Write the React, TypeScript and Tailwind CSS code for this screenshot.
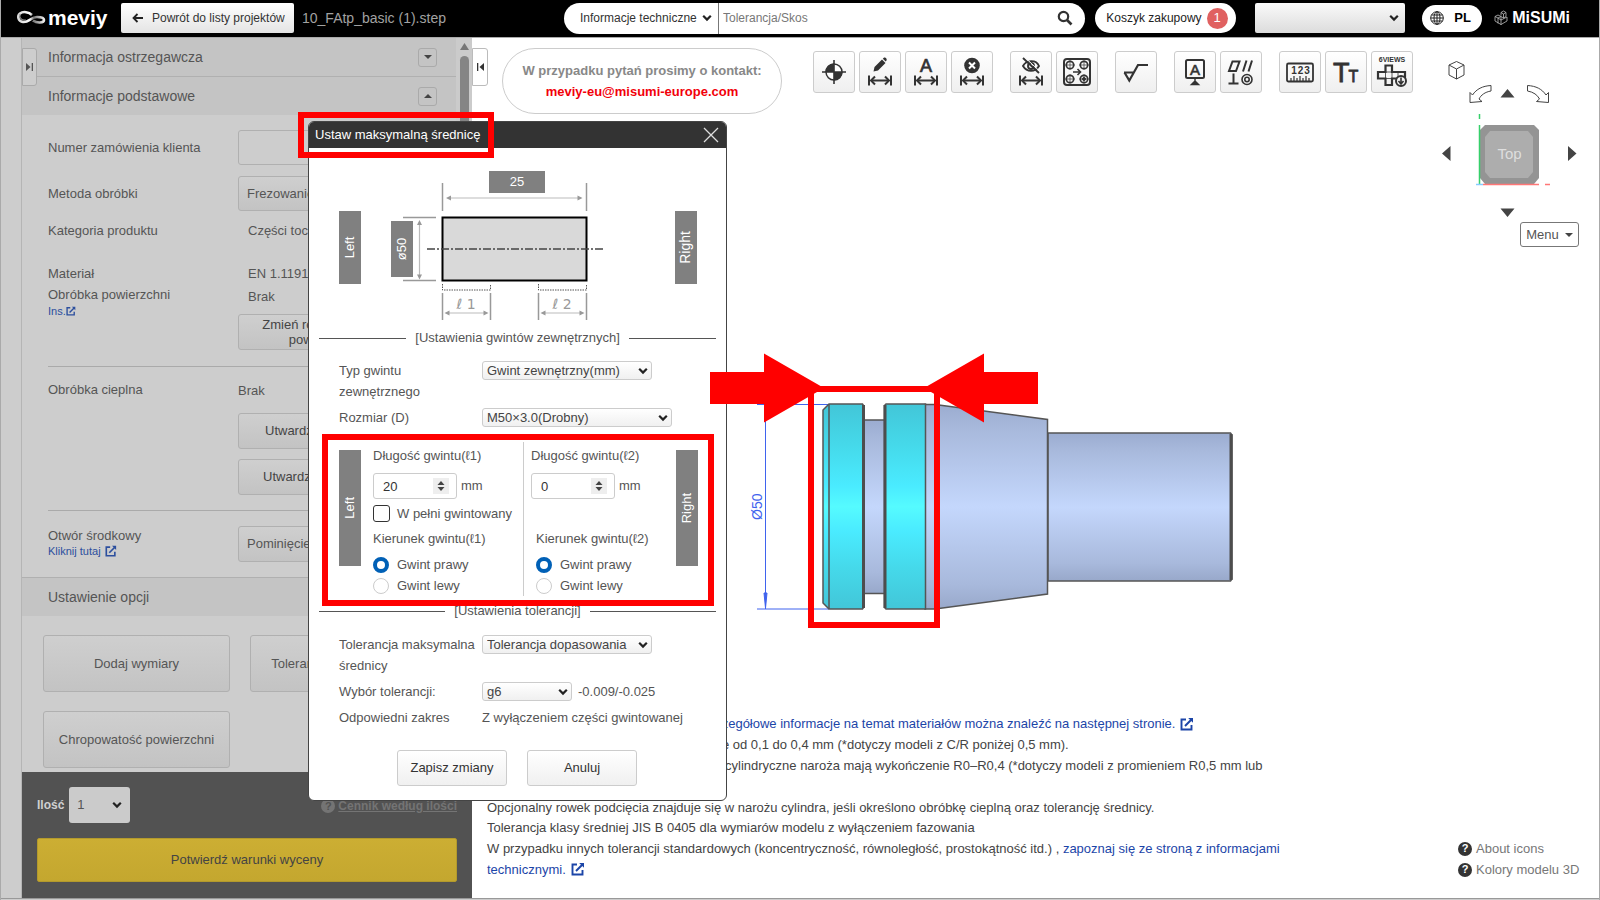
import React from "react";

const FONT = "font-['Liberation_Sans',Arial,sans-serif]";

function Chevron({ className = "" }: { className?: string }) {
  return (
    <svg viewBox="0 0 10 8" className={`pointer-events-none absolute h-2 w-2.5 ${className}`} aria-hidden="true">
      <path d="M1.2 1.8 5 5.6 8.8 1.8" fill="none" stroke="#222" strokeWidth="2.2" />
    </svg>
  );
}

function Select({ label, value, className = "", wrap = "", chevron = "right-2 top-1/2 -mt-1" }: {
  label: string; value: string; className?: string; wrap?: string; chevron?: string;
}) {
  return (
    <div className={`relative ${wrap}`}>
      <select aria-label={label} defaultValue={value} className={`block h-full w-full appearance-none outline-none ${className}`}>
        <option value={value}>{value}</option>
      </select>
      <Chevron className={chevron} />
    </div>
  );
}

function ExternalIcon({ className = "" }: { className?: string }) {
  return (
    <svg viewBox="0 0 14 14" className={`inline-block ${className}`} fill="none" stroke="currentColor" strokeWidth="1.9" aria-hidden="true">
      <path d="M6 2.5H1.5v10h10V8" />
      <path d="M5 9 12 2" />
      <path d="M8.2 1h4.8v4.8z" fill="currentColor" stroke="none" />
    </svg>
  );
}

function HelpDot({ className = "" }: { className?: string }) {
  return (
    <span aria-hidden="true" className={`inline-flex h-3.5 w-3.5 shrink-0 items-center justify-center rounded-full text-[11px] font-bold leading-none ${className}`}>
      ?
    </span>
  );
}

/* ---------- header ---------- */

function Header() {
  return (
    <header className="flex h-[38px] items-center border-b border-[#aaa] bg-black pr-[29px] pb-px pl-[15px]">
      <div className="flex w-[105px] shrink-0 items-center gap-0.5">
        <svg viewBox="0 0 30 18" className="h-[18px] w-[30px]" fill="none" aria-hidden="true">
          <defs>
            <linearGradient id="loop" x1="0" x2="1">
              <stop offset="0" stopColor="#d9d9d9" />
              <stop offset=".45" stopColor="#fff" />
              <stop offset=".6" stopColor="#777" />
              <stop offset="1" stopColor="#eee" />
            </linearGradient>
          </defs>
          <path d="M16 6C13 3 7 2 4 4.500s-2 8 3 8.500c6 .5 8-5 14-5 4 0 7 1 7 3 0 3-7 3.500-11 .5" stroke="url(#loop)" strokeWidth="2.600" />
          <path d="M4 5c-1 4 2 7 6 6" stroke="#8a8a8a" strokeWidth="1.200" />
        </svg>
        <span className="text-[21px] font-bold leading-6 text-white">meviy</span>
      </div>
      <button className="flex h-[30px] w-[173px] shrink-0 items-center gap-[9px] rounded-[2px] bg-linear-to-b from-white to-[#e4e4e4] pl-[11px] text-xs text-[#333]">
        <svg viewBox="0 0 11 10" className="h-2.5 w-[11px]" fill="none" stroke="#222" strokeWidth="1.800" aria-hidden="true">
          <path d="M11 5H1.500M5.500 1 1.500 5l4 4" />
        </svg>
        Powrót do listy projektów
      </button>
      <span className="w-[270px] shrink-0 pl-2 text-sm text-[#a2a2a2]">10_FAtp_basic (1).step</span>
      <div className="flex h-[31px] flex-1 items-stretch overflow-hidden rounded-full bg-white">
        <Select label="Kategoria wyszukiwania" value="Informacje techniczne" wrap="w-[155px] border-r border-[#777]" className="pl-4 text-xs text-[#333]" chevron="right-1.5 top-1/2 -mt-1" />
        <input aria-label="Szukaj" placeholder="Tolerancja/Skos" className="min-w-0 flex-1 pl-1 text-xs outline-none placeholder:text-[#777]" />
        <button aria-label="Szukaj" className="mr-2 w-5">
          <svg viewBox="0 0 16 16" className="h-4 w-4" fill="none" stroke="#333" aria-hidden="true">
            <circle cx="6.500" cy="6.500" r="4.700" strokeWidth="2.200" />
            <path d="m10 10 4.500 4.500" strokeWidth="2.600" />
          </svg>
        </button>
      </div>
      <button className="ml-2.5 flex h-[30px] w-[141px] items-center gap-[5px] rounded-full bg-white pl-[11px] text-xs text-[#222]">
        Koszyk zakupowy
        <span className="flex h-[21px] w-[21px] items-center justify-center rounded-full bg-[#e06161] text-[13px] text-white">1</span>
      </button>
      <Select label="Konto" value=" " wrap="ml-[19px] h-[30px] w-[150px]" className="rounded-[2px] bg-linear-to-b from-[#fafafa] to-[#dcdcdc]" chevron="right-1.5 top-1/2 -mt-1" />
      <button className="ml-[17px] flex h-[27px] w-[60px] items-center gap-2.5 rounded-full bg-white pl-2 text-[13px] font-bold text-black">
        <svg viewBox="0 0 14 14" className="h-3.5 w-3.5" fill="none" stroke="#222" strokeWidth="1" aria-hidden="true">
          <circle cx="7" cy="7" r="6.300" />
          <ellipse cx="7" cy="7" rx="3" ry="6.300" />
          <path d="M7 .7v12.600M.7 7h12.600M1.500 4h11M1.500 10h11" />
        </svg>
        PL
      </button>
      <div className="ml-3 flex items-center gap-1">
        <svg viewBox="0 0 14 16" className="h-4 w-3.5" fill="none" stroke="#bbb" strokeWidth=".8" aria-hidden="true">
          <path d="M1 6.500 4 5l3 1.500v3.500l3-1.500 3-1.500v4l-6 3.500-6-3.500zM1 6.500 4 8v5.500M4 8l3-1.500M7 10v5M7 10l-3-2M7 5.500V2.500L9.500 1 12 2.500v4L9.500 8 7 6.500M7 2.500l2.500 1.500V8M9.500 4 12 2.500" />
        </svg>
        <span className="text-base font-bold leading-5 text-white">MiSUMi</span>
      </div>
    </header>
  );
}

/* ---------- side panel ---------- */

const sideBtn = "rounded-[3px] border border-[#b0b0b0] bg-linear-to-b from-[#cfcfcf] to-[#c3c3c3] text-[13px]";

function Toggle({ up, label }: { up?: boolean; label: string }) {
  return (
    <button aria-label={label} className="flex h-[19px] w-[19px] items-center justify-center rounded-[3px] border border-[#aaa]">
      <svg viewBox="0 0 8 4" className="h-1 w-2" aria-hidden="true">
        <path d={up ? "M0 4 4 0l4 4z" : "M0 0h8L4 4z"} fill="#444" />
      </svg>
    </button>
  );
}

function Sidebar() {
  return (
    <aside className="flex shrink-0 bg-[#cdcdcd] text-[13px] text-[#555]">
      <div className="w-[21px] border-r border-[#b5b5b5]" />
      <div className="relative flex w-[450px] flex-col">
        <button aria-label="Rozwiń panel" className="absolute top-[10px] left-0 flex h-[38px] w-[15px] items-center justify-center rounded-r-[3px] border border-[#aaa] bg-[#cdcdcd]">
          <svg viewBox="0 0 7 8" className="h-2 w-[7px]" fill="#555" aria-hidden="true"><path d="M0 0l4.500 4L0 8zM5.700 0H7v8H5.700z" /></svg>
        </button>
        <div className="flex">
          <div className="w-[434px]">
            <div className="flex h-[39px] items-center justify-between border-b border-[#b0b0b0] bg-[#c4c4c4] pr-[19px] pl-[26px] text-sm">
              <h2>Informacja ostrzegawcza</h2><Toggle label="Rozwiń ostrzeżenia" />
            </div>
            <div className="flex h-[38px] items-center justify-between bg-[#c4c4c4] pr-[19px] pl-[26px] text-sm">
              <h2>Informacje podstawowe</h2><Toggle up label="Zwiń informacje" />
            </div>
            <div className="pt-[15px] pl-[26px]">
              <div className="grid grid-cols-[190px_170px] items-center gap-y-[11px]">
                <label htmlFor="order">Numer zamówienia klienta</label>
                <input id="order" className="h-[35px] rounded-[3px] border border-[#b0b0b0]" />
                <span>Metoda obróbki</span>
                <Select label="Metoda obróbki" value="Frezowanie" wrap="h-[35px]" className={`${sideBtn} pl-2`} />
              </div>
              <div className="mt-2.5 grid grid-cols-[200px_1fr] leading-5">
                <span>Kategoria produktu</span><span>Części toczone</span>
              </div>
              <div className="mt-[23px] grid grid-cols-[200px_1fr] leading-5">
                <span>Materiał</span><span>EN 1.1191</span>
              </div>
              <div className="mt-0.5 grid grid-cols-[190px_170px]">
                <div>
                  <div className="leading-[18px]">Obróbka powierzchni</div>
                  <a href="#ins" className="flex items-center text-[11px] leading-[14px] text-[#2c4f9e]">Ins.<ExternalIcon className="h-2.5 w-2.5" /></a>
                </div>
                <div>
                  <div className="pl-2.5 leading-[22px]">Brak</div>
                  <button className={`${sideBtn} mt-1.5 h-9 w-full leading-[15px] text-[#444]`}>Zmień rodzaj obróbki<br />powierzchni</button>
                </div>
              </div>
              <hr className="mt-4 border-[#aaa]" />
              <div className="mt-[13px] grid grid-cols-[190px_170px]">
                <div className="leading-5">Obróbka cieplna</div>
                <div>
                  <div className="leading-[22px]">Brak</div>
                  <button className={`${sideBtn} mt-[11px] h-9 w-full pl-[26px] text-left text-[#444]`}>Utwardzanie</button>
                  <button className={`${sideBtn} mt-2.5 h-9 w-full pl-6 text-left text-[#444]`}>Utwardzanie</button>
                </div>
              </div>
              <hr className="mt-[15px] border-[#aaa]" />
              <div className="mt-[15px] mb-[15px] grid grid-cols-[190px_170px]">
                <div>
                  <div className="leading-[19px]">Otwór środkowy</div>
                  <a href="#center" className="flex items-center gap-1 text-[11px] leading-3 text-[#2c4f9e]">Kliknij tutaj<ExternalIcon className="h-3 w-3" /></a>
                </div>
                <Select label="Otwór środkowy" value="Pominięcie" wrap="h-9" className={`${sideBtn} pl-2`} />
              </div>
            </div>
            <div className="flex h-[39px] items-center border-t border-[#b0b0b0] bg-[#c4c4c4] pl-[26px] text-sm"><h2>Ustawienie opcji</h2></div>
            <div className="grid grid-cols-[187px_187px] gap-x-5 gap-y-[19px] pt-[19px] pb-1 pl-[21px]">
              <button className={`${sideBtn} h-[57px]`}>Dodaj wymiary</button>
              <button className={`${sideBtn} h-[57px]`}>Tolerancja geometryczna</button>
              <button className={`${sideBtn} h-[57px]`}>Chropowatość powierzchni</button>
            </div>
          </div>
          <div className="flex flex-1 flex-col items-center gap-1.5 bg-[#cbcbcb] pt-[5px]">
            <svg viewBox="0 0 9 7" className="h-[7px] w-[9px] shrink-0" aria-hidden="true"><path d="M0 7 4.500 0 9 7z" fill="#777" /></svg>
            <div className="h-[420px] w-[9px] rounded-full bg-[#858585]" />
          </div>
        </div>
        <div className="flex-1 bg-[#525252] px-[15px] pt-[15px] pb-4">
          <div className="flex items-center text-xs font-bold">
            <label htmlFor="qty" className="text-[#d0d0d0]">Ilość</label>
            <div className="relative ml-[5px] h-9 w-[61px]">
              <select id="qty" className="h-full w-full appearance-none rounded-[3px] bg-[#cbcbcb] pl-2 text-[13px] font-normal text-[#555]" defaultValue="1"><option>1</option></select>
              <Chevron className="top-[14px] right-2" />
            </div>
            <a href="#prices" className="mt-0.5 ml-auto flex items-center gap-[3px] text-[#747474]">
              <HelpDot className="bg-[#747474] text-[#525252]" /><span className="underline">Cennik według ilości</span>
            </a>
          </div>
          <button className="mt-[15px] h-11 w-full rounded-[2px] border border-[#b39a2c] bg-linear-to-b from-[#ccae33] to-[#c4a72f] text-[13px] text-[#444]">Potwierdź warunki wyceny</button>
        </div>
      </div>
    </aside>
  );
}

/* ---------- toolbar ---------- */

const Dim = () => (
  <g fill="none" stroke="#333" strokeWidth="2">
    <path d="M9 23.500v10M31 23.500v10M11 28.500h18" />
    <path d="m15 24.500-4 4 4 4M25 24.500l4 4-4 4" />
  </g>
);

const tools: { name: string; icon: React.ReactNode }[][] = [
  [
    { name: "Punkt odniesienia", icon: <><circle cx="20" cy="20" r="8" fill="#fff" stroke="#333" strokeWidth="1.500" /><path d="M20 20v-8.500a8.500 8.500 0 0 0-8.500 8.500zM20 20v8.500a8.500 8.500 0 0 0 8.500-8.500z" fill="#333" /><path d="M20 8v24M8 20h24" stroke="#333" strokeWidth="1.600" /></> },
    { name: "Edytuj wymiar", icon: <><path d="m13.500 19.500 1-4.500 7.500-7.500 3.500 3.500-7.500 7.500zM22.800 6.700l1-1c1.500-1 3.700 1.200 2.700 2.700l-.8 1z" fill="#333" /><Dim /></> },
    { name: "Wymiar tekstowy", icon: <><text x="20" y="19.500" fontSize="18" textAnchor="middle" fill="#333" stroke="#333" strokeWidth=".7">A</text><Dim /></> },
    { name: "Usuń wymiar", icon: <><circle cx="20" cy="13.500" r="7.800" fill="#333" /><path d="m17 10.500 6 6M23 10.500l-6 6" stroke="#fff" strokeWidth="2" /><Dim /></> },
  ],
  [
    { name: "Ukryj wymiar", icon: <><g fill="none" stroke="#333" strokeWidth="1.900"><path d="M12 14c3-6 13-7 16 0-4 6.500-12 6.500-16 0z" /><circle cx="20" cy="14" r="3" /><path d="m12 6 16 15" /></g><path d="m14 5.500 15 14" stroke="#fafafa" strokeWidth="1" /><Dim /></> },
    { name: "Grupuj otwory", icon: <g fill="none" stroke="#333"><rect x="7" y="7" width="26" height="26" rx="3" strokeWidth="2" /><g strokeWidth="1.700"><circle cx="13" cy="13" r="3.700" /><circle cx="27" cy="13" r="3.700" /><circle cx="13" cy="27" r="3.700" /><circle cx="27" cy="27" r="3.700" /></g><path d="M13 8v10M8 13h10M27 8v10M22 13h10M13 22v10M8 27h10M27 22v10M22 27h10" strokeWidth=".7" /><circle cx="27" cy="27" r="1.500" fill="#333" /><path d="M16 20h7M20.500 17l3 3-3 3" strokeWidth="1.600" /></g> },
  ],
  [{ name: "Chropowatość", icon: <path d="M8 20.500h10M8.500 20.500l4.800 8L22 13h10" fill="none" stroke="#333" strokeWidth="2.200" /> }],
  [
    { name: "Baza", icon: <><rect x="11" y="8" width="18" height="18" rx="1.500" fill="none" stroke="#333" strokeWidth="2" /><text x="20" y="22.500" fontSize="15" textAnchor="middle" fill="#333" stroke="#333" strokeWidth=".6">A</text><path d="M20 26v4M16.500 32.500l3.500-3.500 3.500 3.500z" fill="#333" stroke="#333" strokeWidth="1.500" /></> },
    { name: "Tolerancje geometryczne", icon: <g fill="none" stroke="#333" strokeWidth="2"><path d="M11.500 9.500h7l-3.500 9.500H8zM25.500 8.500l-3.500 11M31 8.500l-3.500 11M12.500 21.500v10M7.500 31.500h10" /><circle cx="26" cy="27.500" r="5" strokeWidth="1.600" /><circle cx="26" cy="27.500" r="2.200" strokeWidth="1.600" /></g> },
  ],
  [
    { name: "Pomiar", icon: <><rect x="7" y="11.500" width="26" height="18" rx="1.500" fill="none" stroke="#333" strokeWidth="1.800" /><g fontSize="10" fontWeight="700" textAnchor="middle" fill="#333"><text x="14" y="22">1</text><text x="20.500" y="22">2</text><text x="27" y="22">3</text></g><path d="M11 29v-3M14 29v-5M17 29v-3M20 29v-5M23 29v-3M26 29v-5M29 29v-3" stroke="#333" strokeWidth="1.200" /></> },
    { name: "Rozmiar tekstu", icon: <g fill="#333" stroke="#333" strokeWidth=".8"><text x="7" y="30" fontSize="27">T</text><text x="22.500" y="30" fontSize="16">T</text></g> },
    { name: "Sześć widoków", icon: <><text x="20" y="10" fontSize="7" fontWeight="700" textAnchor="middle" fill="#333">6VIEWS</text><g fill="none" stroke="#333" strokeWidth="2.200"><path d="M13.500 20v-6.500H20V20h13v6.500H20V33h-6.500v-6.500H6V20z" /><path d="M13.500 20v6.500M20 20v6.500M26 20v6.500M13.500 20H20M13.500 26.500H20" strokeWidth=".8" /></g><circle cx="29" cy="29" r="5" fill="#f4f4f4" stroke="#333" strokeWidth="2" /><path d="M29 25.500v6M26.500 29l2.500 3 2.500-3" fill="none" stroke="#333" strokeWidth="1.600" /></> },
  ],
];

function Toolbar() {
  return (
    <div className="ml-[31px] flex gap-[17px] pt-[3px]" role="toolbar">
      {tools.map((group, i) => (
        <div key={i} className="flex gap-1">
          {group.map((t) => (
            <button key={t.name} aria-label={t.name} className="h-[42px] w-[42px] rounded-[3px] border border-[#ccc] bg-linear-to-b from-white to-[#efefef]">
              <svg viewBox="0 0 40 40" className="h-10 w-10" aria-hidden="true">{t.icon}</svg>
            </button>
          ))}
        </div>
      ))}
    </div>
  );
}

function ViewNavigator() {
  return (
    <div className="flex w-[140px] flex-col items-end">
      <svg viewBox="1438 58 140 162" className="h-[162px] w-[140px]" aria-label="Top">
        <g fill="none" stroke="#444" strokeWidth="1">
          <path d="M1455.500 61.500 1463 65v10l-7.500 4-7.500-4V65zM1448 65l7.500 4 7.500-4M1455.500 69v10" />
          <path d="M1490 85.500v5.500c-6 1-10 4-12 8l3 2.500-12 1v-10l2.500 2.500c4-6 10-9 18.500-9.500z" />
          <path d="M1526.500 85.500v5.500c6 1 10 4 12 8l-3 2.500 12 1v-10l-2.500 2.500c-4-6-10-9-18.500-9.500z" />
        </g>
        <g fill="#444"><path d="M1499.500 97.500h14l-7-8.500zM1499.500 208.500h14l-7 8.500zM1449.500 146v15l-8.500-7.500zM1567 146v15l8.500-7.500z" /></g>
        <path d="M1484 125h49l5 5v48l-5 6h-49l-5-6v-48z" fill="#949494" />
        <path d="M1489 131h38l5 6v35l-5 6h-38l-5-6v-35z" fill="#adadad" />
        <text x="1508.500" y="158.500" fontSize="15" textAnchor="middle" fill="#dedede">Top</text>
        <path d="M1478.500 114v5M1478.500 125v59" stroke="#35d06a" strokeWidth="1.500" />
        <path d="M1482 184.500h56M1544 184.500h5" stroke="#f77" strokeWidth="1.500" />
        <path d="M1475 184.500h7" stroke="#8cf" strokeWidth="1.500" />
      </svg>
      <button className="mt-0.5 flex h-[25px] w-[59px] items-center justify-center gap-1.5 rounded-[3px] border border-[#777] text-[13px] text-[#555]">
        Menu
        <svg viewBox="0 0 8 4" className="h-1 w-2" aria-hidden="true"><path d="M0 0h8L4 4z" fill="#444" /></svg>
      </button>
    </div>
  );
}

/* ---------- model ---------- */

function Model() {
  return (
    <svg viewBox="748 395 492 222" className="h-[222px] w-[492px]" aria-label="Model 3D">
      <defs>
        <linearGradient id="steel" x1="0" y1="0" x2="0" y2="1">
          <stop offset="0" stopColor="#9bacd0" /><stop offset=".12" stopColor="#a8b9dc" /><stop offset=".5" stopColor="#c4d7fc" /><stop offset=".88" stopColor="#a8b9dc" /><stop offset="1" stopColor="#98a8ca" />
        </linearGradient>
        <linearGradient id="cyan" x1="0" y1="0" x2="0" y2="1">
          <stop offset="0" stopColor="#42c6d8" /><stop offset=".2" stopColor="#45d9ea" /><stop offset=".4" stopColor="#4aebff" /><stop offset=".5" stopColor="#55fbff" /><stop offset=".62" stopColor="#4aebff" /><stop offset=".8" stopColor="#45d9ea" /><stop offset="1" stopColor="#42c6d8" />
        </linearGradient>
      </defs>
      <g stroke="#3f63ee" strokeWidth="1">
        <path d="M757 404.500h72M757 609h72M765.500 404v205" />
        <path d="m764 593 1.500 15 1.500-15z" fill="#3f63ee" />
      </g>
      <text transform="translate(762 520) rotate(-90)" fontSize="14" fill="#3f63ee">Ø50</text>
      <g stroke="#555" strokeWidth="1.500">
        <path d="M863 420h22v173.500h-22z" fill="url(#steel)" />
        <path d="M1048 433h182.500l1.500 2v144l-1.500 2H1048z" fill="url(#steel)" />
        <path d="M925 404.500h10l112.500 15V594L935 609h-10z" fill="url(#steel)" />
        <path d="m829 404-6 6v193l6 6h33.500l1-1.500V405.500l-1-1.500z" fill="url(#cyan)" />
        <path d="M829 404v205" />
        <path d="M925.500 404H886l-1.500 1.500v202l1.500 1.500h39.500z" fill="url(#cyan)" />
      </g>
      <path d="M863.500 405v203M885 405v203M1231 434v146" stroke="#4d4d4d" strokeWidth="3" />
    </svg>
  );
}

function Viewer() {
  const link = "text-[#1c45a8]";
  return (
    <main className="flex min-w-0 flex-1 flex-col">
      <div className="flex items-start pt-[10px] pr-5">
        <button aria-label="Zwiń panel" className="flex h-[38px] w-4 items-center justify-center rounded-r-[3px] border border-[#bbb] bg-white">
          <svg viewBox="0 0 7 8" className="h-2 w-[7px]" fill="#333" aria-hidden="true"><path d="M7 0 2.500 4 7 8zM0 0h1.300v8H0z" /></svg>
        </button>
        <div className="ml-[14px] flex h-[66px] w-[280px] shrink-0 flex-col items-center justify-center rounded-full border border-[#ccc] text-[13px] leading-[21px] font-bold">
          <span className="text-[#888]">W przypadku pytań prosimy o kontakt:</span>
          <a href="mailto:meviy-eu@misumi-europe.com" className="text-[#f2000a]">meviy-eu@misumi-europe.com</a>
        </div>
        <Toolbar />
        <div className="mt-[10px] ml-auto"><ViewNavigator /></div>
      </div>
      <div className="flex flex-1 items-center pt-[145px] pl-[276px]"><Model /></div>
      <div className="mt-auto flex items-end justify-between pt-[95px] pr-[19px] pb-[18px] pl-[15px] text-[13px] leading-[21px] text-[#444]">
        <div>
          <p className="flex items-center pl-[213px] leading-5">
            <a href="#materials" className={`flex items-center gap-[5px] ${link}`}>Szczegółowe informacje na temat materiałów można znaleźć na następnej stronie. <ExternalIcon className="h-3.5 w-3.5" /></a>
          </p>
          <p className="pl-[232px]">ie od 0,1 do 0,4 mm (*dotyczy modeli z C/R poniżej 0,5 mm).</p>
          <p className="pl-[238px]">cylindryczne naroża mają wykończenie R0–R0,4 (*dotyczy modeli z promieniem R0,5 mm lub</p>
          <p className="pt-[21px]">Opcjonalny rowek podcięcia znajduje się w narożu cylindra, jeśli określono obróbkę cieplną oraz tolerancję średnicy.</p>
          <p className="leading-5">Tolerancja klasy średniej JIS B 0405 dla wymiarów modelu z wyłączeniem fazowania</p>
          <p className="max-w-[800px]">W przypadku innych tolerancji standardowych (koncentryczność, równoległość, prostokątność itd.) , <a href="#info" className={link}>zapoznaj się ze stroną z informacjami technicznymi. <ExternalIcon className="ml-0.5 h-3.5 w-3.5 align-[-2px]" /></a></p>
        </div>
        <div className="w-[122px] shrink-0 text-[#777]">
          <a href="#icons" className="flex items-center gap-1"><HelpDot className="bg-[#333] text-white" />About icons</a>
          <a href="#colors" className="flex items-center gap-1 whitespace-nowrap"><HelpDot className="bg-[#333] text-white" />Kolory modelu 3D</a>
        </div>
      </div>
    </main>
  );
}

/* ---------- dialog ---------- */

function Diagram() {
  return (
    <svg viewBox="309 148 417 180" className="block h-[180px] w-[417px]" aria-label="Schemat wymiarów gwintu">
      <g fill="#808080">
        <path d="M489 171h56v22h-56zM339 211h22v73h-22zM391 221h22v56h-22zM675 211h22v73h-22z" />
      </g>
      <g fill="#fff" fontSize="13" textAnchor="middle">
        <text x="517" y="186">25</text>
        <text transform="translate(353.500 247.500) rotate(-90)">Left</text>
        <text transform="translate(405.500 249) rotate(-90)">ø50</text>
        <text transform="translate(690 247.500) rotate(-90)" fontSize="14">Right</text>
      </g>
      <rect x="442.500" y="217.500" width="144" height="63" fill="#d9d9d9" stroke="#000" strokeWidth="2" />
      <path d="M427 249h178" stroke="#444" strokeWidth="1.500" strokeDasharray="8 2 2 2" />
      <g stroke="#999" strokeWidth="1.500">
        <path d="M442.500 183v28M586.500 183v28M403 217.500h33M403 280.500h33M442.500 293v27M490.500 293v27M538.500 293v27M586.500 293v27" />
      </g>
      <path d="M448 198h133M419.500 222v55M447 313h39M543 313h39" stroke="#bbb" strokeWidth="1.200" />
      <g fill="#999">
        <path d="M446 198l5-2.500v5zM582.500 198l-5-2.500v5zM419.500 220l-2.500 5h5zM419.500 279.500l-2.500-5h5zM444.500 313l5-2.500v5zM488.500 313l-5-2.500v5zM540.500 313l5-2.500v5zM584.500 313l-5-2.500v5z" />
      </g>
      <path d="M442.500 284v6h48v-6M538.500 284v6h48v-6" fill="none" stroke="#555" strokeDasharray="1.500 1" />
      <g fill="#999" fontSize="14" textAnchor="middle" className="font-['DejaVu_Sans']">
        <text x="466" y="309">ℓ 1</text><text x="562" y="309">ℓ 2</text>
      </g>
    </svg>
  );
}

function Rule({ children }: { children: React.ReactNode }) {
  return (
    <div className="flex h-5 items-center gap-[9px] px-2.5">
      <span className="h-px flex-1 bg-[#555]" /><h3>{children}</h3><span className="h-px flex-1 bg-[#555]" />
    </div>
  );
}

const modalSelect = "rounded-[3px] border border-[#ccc] bg-linear-to-b from-white to-[#f0f0f0] pl-1 text-[13px] leading-4 text-[#444]";

function Stepper({ label, value, id }: { label: string; value: string; id: string }) {
  return (
    <>
      <label htmlFor={id} className="block leading-5">{label}</label>
      <div className="mt-[7px] flex items-center gap-1">
        <div className="relative h-[26px] w-[84px]">
          <input id={id} defaultValue={value} className="h-full w-full rounded-[3px] border border-[#ccc] pl-[9px] text-[13px] text-[#333]" />
          <span className="pointer-events-none absolute top-[5px] right-2 flex h-4 w-4 items-center justify-center bg-[#eee]">
            <svg viewBox="0 0 8 10" className="h-2.5 w-2" aria-hidden="true"><path d="M.5 4 4 0l3.500 4zM.5 6 4 10l3.500-4z" fill="#444" /></svg>
          </span>
        </div>
        mm
      </div>
    </>
  );
}

function Direction({ name, label }: { name: string; label: string }) {
  const radio = "h-4 w-4 shrink-0 appearance-none rounded-full border border-[#ccc] bg-white checked:border-4 checked:border-[#0060b6]";
  return (
    <fieldset>
      <legend className="leading-5">{label}</legend>
      <label className="mt-[5px] flex h-[21px] items-center gap-2"><input type="radio" name={name} defaultChecked className={radio} />Gwint prawy</label>
      <label className="flex h-[21px] items-center gap-2"><input type="radio" name={name} className={radio} />Gwint lewy</label>
    </fieldset>
  );
}

function SideTag({ children }: { children: React.ReactNode }) {
  return (
    <div className="mt-2 flex h-[116px] w-[22px] items-center justify-center bg-[#808080] text-white">
      <span className="rotate-180 [writing-mode:vertical-rl]">{children}</span>
    </div>
  );
}

function Dialog() {
  const btn = "h-9 w-[110px] rounded-[3px] border border-[#ccc] bg-linear-to-b from-white to-[#f0f0f0] text-[13px] text-[#333]";
  return (
    <section role="dialog" aria-label="Ustaw maksymalną średnicę" className="absolute top-[121px] left-[307px] z-10 w-[419px] overflow-hidden rounded-md border border-[#444] bg-white text-[13px] text-[#555]">
      <div className="flex h-[26px] items-center justify-between bg-[#333] pr-[7px] pl-1.5 text-white">
        <h1>Ustaw maksymalną średnicę</h1>
        <button aria-label="Zamknij"><svg viewBox="0 0 16 16" className="block h-4 w-4" stroke="#ddd" strokeWidth="1.300" aria-hidden="true"><path d="m1 1 14 14M15 1 1 15" /></svg></button>
      </div>
      <Diagram />
      <Rule>[Ustawienia gwintów zewnętrznych]</Rule>
      <div className="mt-3 grid grid-cols-[143px_1fr] gap-y-[5px] pl-[30px] leading-[21px]">
        <span className="max-w-[120px]">Typ gwintu zewnętrznego</span>
        <Select label="Typ gwintu zewnętrznego" value="Gwint zewnętrzny(mm)" wrap="mt-px h-[19px] w-[170px]" className={modalSelect} chevron="right-1 top-[6px]" />
        <span>Rozmiar (D)</span>
        <Select label="Rozmiar (D)" value="M50×3.0(Drobny)" wrap="mt-px h-[19px] w-[190px]" className={modalSelect} chevron="right-1 top-[6px]" />
      </div>
      <div className="mt-[14px] flex h-[154px] pl-[30px]">
        <SideTag>Left</SideTag>
        <div className="w-[151px] pt-1 pl-3">
          <Stepper id="len1" label="Długość gwintu(ℓ1)" value="20" />
          <label className="mt-1 mb-[5px] flex h-[21px] items-center gap-[7px] whitespace-nowrap">
            <input type="checkbox" className="h-[17px] w-[17px] appearance-none rounded-[3px] border border-[#333]" />W pełni gwintowany
          </label>
          <Direction name="dir1" label="Kierunek gwintu(ℓ1)" />
        </div>
        <div className="ml-[11px] w-[153px] border-l border-[#ccc] pt-1 pl-[7px]">
          <Stepper id="len2" label="Długość gwintu(ℓ2)" value="0" />
          <div className="mt-[30px] pl-[5px]"><Direction name="dir2" label="Kierunek gwintu(ℓ2)" /></div>
        </div>
        <SideTag>Right</SideTag>
      </div>
      <div className="mt-[5px]"><Rule>[Ustawienia tolerancji]</Rule></div>
      <div className="mt-[13px] grid grid-cols-[143px_1fr] gap-y-[5px] pl-[30px] leading-[21px]">
        <span>Tolerancja maksymalna średnicy</span>
        <Select label="Tolerancja maksymalna średnicy" value="Tolerancja dopasowania" wrap="mt-px h-[19px] w-[170px]" className={modalSelect} chevron="right-1 top-[6px]" />
        <span>Wybór tolerancji:</span>
        <div className="flex items-center gap-1.5">
          <Select label="Wybór tolerancji" value="g6" wrap="h-[19px] w-[90px]" className={modalSelect} chevron="right-1 top-[6px]" />
          -0.009/-0.025
        </div>
        <span>Odpowiedni zakres</span>
        <span>Z wyłączeniem części gwintowanej</span>
      </div>
      <div className="mt-[22px] mb-[14px] flex justify-center gap-5 pr-px">
        <button className={btn}>Zapisz zmiany</button>
        <button className={btn}>Anuluj</button>
      </div>
    </section>
  );
}

export default function App() {
  const frame = "pointer-events-none absolute z-20 border-[6px] border-[#ff0000]";
  return (
    <div className={`relative flex min-h-screen flex-col overflow-hidden border-x border-[#aaa] bg-white ${FONT}`}>
      <Header />
      <div className="flex flex-1"><Sidebar /><Viewer /></div>
      <div className="h-[3px] border-t border-[#999] bg-[#ccc]" />
      <Dialog />
      <div className={`${frame} top-[112px] left-[297px] h-[46px] w-[196px]`} />
      <div className={`${frame} top-[434px] left-[321px] h-[172px] w-[392px]`} />
      <div className={`${frame} top-[386px] left-[807px] h-[242px] w-[132px]`} />
      <svg viewBox="710 353 328 70" className="pointer-events-none absolute top-[353px] left-[709px] z-20 h-[70px] w-[328px]" fill="#ff0000" aria-hidden="true">
        <path d="M710 372h54v-18.500L824 388l-60 34.500V404h-54zM1038 372h-54v-18.500L924 388l60 34.500V404h54z" />
      </svg>
    </div>
  );
}
